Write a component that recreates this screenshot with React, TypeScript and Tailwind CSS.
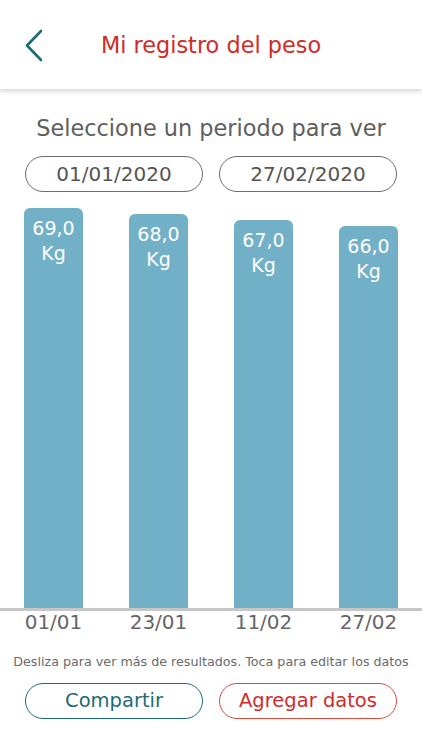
import React from 'react';

const bars = [
  { value: '69,0', date: '01/01', h: 400 },
  { value: '68,0', date: '23/01', h: 394 },
  { value: '67,0', date: '11/02', h: 388 },
  { value: '66,0', date: '27/02', h: 382 },
];

function App() {
  return (
    <div
      className="w-[422px] h-[750px] bg-white overflow-hidden flex flex-col"
      style={{ fontFamily: '"DejaVu Sans", Verdana, sans-serif' }}
    >
      {/* Header */}
      <header className="relative h-[89px] flex items-center justify-center shadow-[0_2px_5px_rgba(0,0,0,0.18)] z-10">
        <button className="absolute left-[24px] top-[29px] w-[20px] h-[33px]">
          <svg viewBox="0 0 20 33" className="w-[20px] h-[33px]" fill="none">
            <path d="M17 2 L3 16.5 L17 31" stroke="#1d6b77" strokeWidth="2.6" strokeLinecap="round" strokeLinejoin="round" />
          </svg>
        </button>
        <h1 className="text-[22.4px] text-[#d22b27] pt-[3px]">Mi registro del peso</h1>
      </header>

      {/* Period */}
      <p className="text-center text-[22.4px] text-[#5e5e5e] mt-[24px] leading-[30px]">Seleccione un periodo para ver</p>
      <div className="flex justify-between px-[25px] mt-[13px]">
        {['01/01/2020', '27/02/2020'].map((d) => (
          <div
            key={d}
            className="w-[178px] h-[36px] rounded-full border border-[#6b6b6b] flex items-center justify-center text-[20px] text-[#555]"
          >
            {d}
          </div>
        ))}
      </div>

      {/* Chart */}
      <div className="mt-[15px] flex items-end justify-between px-[24px] h-[401px]">
        {bars.map((b) => (
          <div
            key={b.date}
            className="w-[59px] bg-[#72b0c8] rounded-t-[6px] flex flex-col items-center pt-[8px] text-white text-[19px] leading-[25px]"
            style={{ height: b.h }}
          >
            <span>{b.value}</span>
            <span>Kg</span>
          </div>
        ))}
      </div>
      <div className="h-[3px] bg-[#c6c6c6]" />
      <div className="flex justify-between px-[24px]">
        {bars.map((b) => (
          <div key={b.date} className="w-[59px] flex justify-center text-[20px] text-[#666] leading-[22px] whitespace-nowrap">
            {b.date}
          </div>
        ))}
      </div>

      {/* Footer */}
      <p className="text-center text-[12.7px] text-[#6a6a6a] mt-[19px]">Desliza para ver más de resultados. Toca para editar los datos</p>
      <div className="flex justify-between px-[25px] mt-[12px]">
        <button className="w-[178px] h-[36px] rounded-full border-[1.5px] border-[#1d6b77] text-[#1d6b77] text-[19.5px]">Compartir</button>
        <button className="w-[178px] h-[36px] rounded-full border-[1.5px] border-[#e0493a] text-[#d22b27] text-[19.5px]">Agregar datos</button>
      </div>
    </div>
  );
}

export default App;
